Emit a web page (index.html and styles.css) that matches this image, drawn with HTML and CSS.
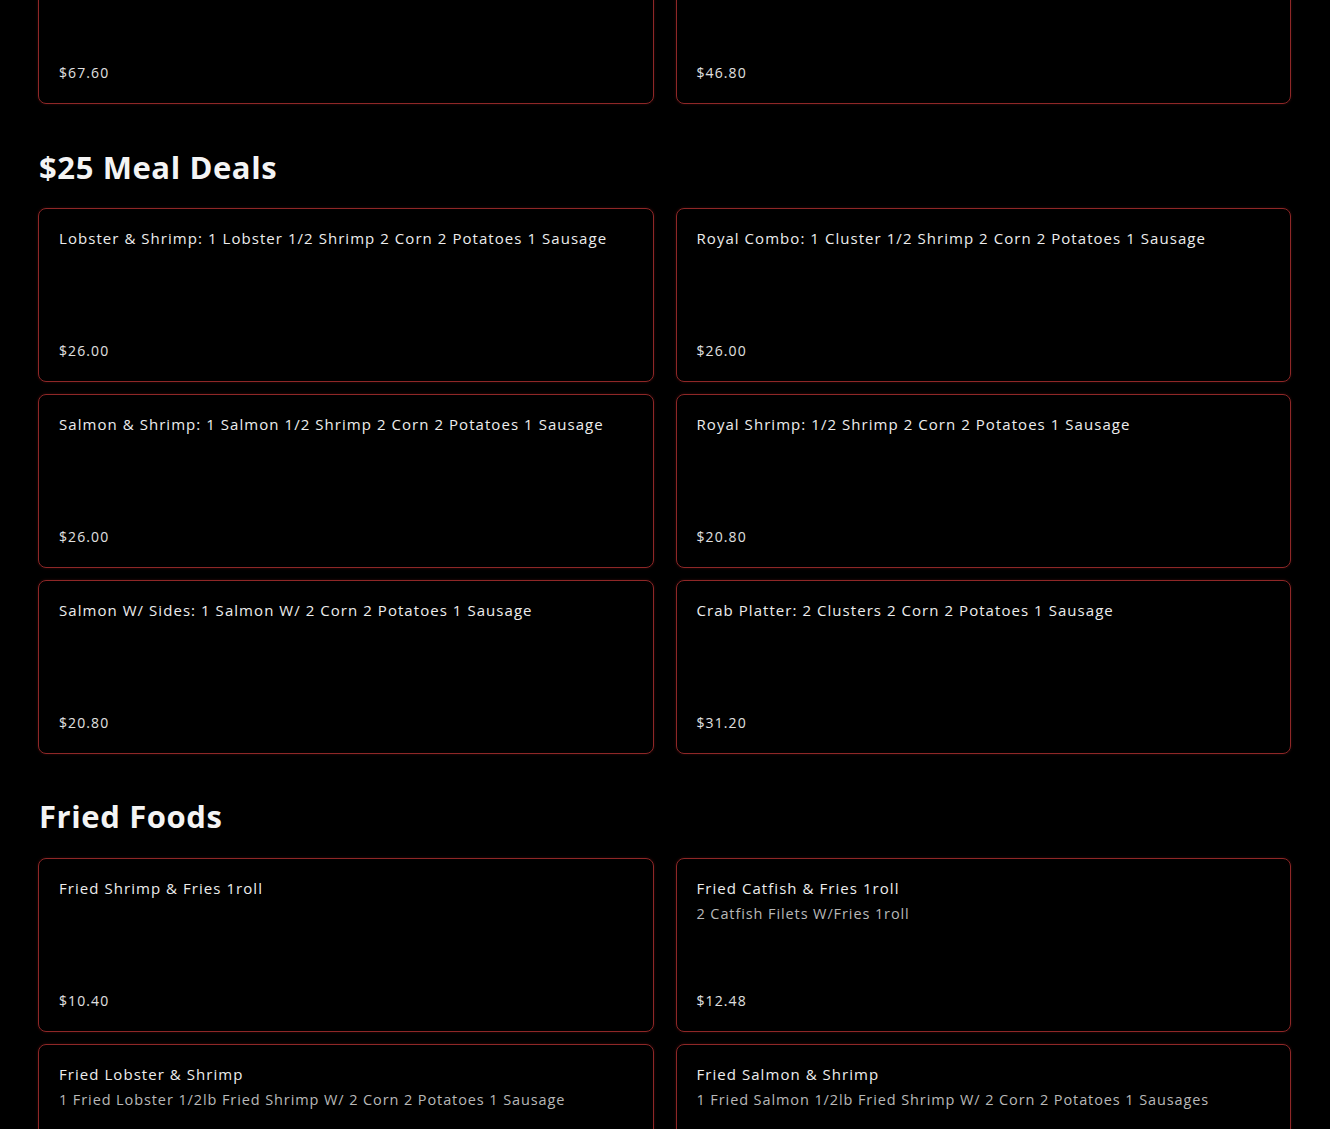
FILE: index.html
```html
<!DOCTYPE html>
<html lang="en">
<head>
<meta charset="utf-8">
<title>Menu</title>
<link rel="stylesheet" href="styles.css">
</head>
<body>
<main class="page">
  <div class="grid grid-top">
    <div class="card card-partial"><div class="price">$67.60</div></div>
    <div class="card card-partial"><div class="price">$46.80</div></div>
  </div>

  <h2 class="section-title">$25 Meal Deals</h2>
  <div class="grid">
    <div class="card"><div class="title">Lobster &amp; Shrimp: 1 Lobster 1/2 Shrimp 2 Corn 2 Potatoes 1 Sausage</div><div class="price">$26.00</div></div>
    <div class="card"><div class="title">Royal Combo: 1 Cluster 1/2 Shrimp 2 Corn 2 Potatoes 1 Sausage</div><div class="price">$26.00</div></div>
    <div class="card"><div class="title">Salmon &amp; Shrimp: 1 Salmon 1/2 Shrimp 2 Corn 2 Potatoes 1 Sausage</div><div class="price">$26.00</div></div>
    <div class="card"><div class="title">Royal Shrimp: 1/2 Shrimp 2 Corn 2 Potatoes 1 Sausage</div><div class="price">$20.80</div></div>
    <div class="card"><div class="title">Salmon W/ Sides: 1 Salmon W/ 2 Corn 2 Potatoes 1 Sausage</div><div class="price">$20.80</div></div>
    <div class="card"><div class="title">Crab Platter: 2 Clusters 2 Corn 2 Potatoes 1 Sausage</div><div class="price">$31.20</div></div>
  </div>

  <h2 class="section-title section-title-next">Fried Foods</h2>
  <div class="grid">
    <div class="card"><div class="title">Fried Shrimp &amp; Fries 1roll</div><div class="price">$10.40</div></div>
    <div class="card"><div class="title">Fried Catfish &amp; Fries 1roll</div><div class="desc">2 Catfish Filets W/Fries 1roll</div><div class="price">$12.48</div></div>
    <div class="card"><div class="title">Fried Lobster &amp; Shrimp</div><div class="desc">1 Fried Lobster 1/2lb Fried Shrimp W/ 2 Corn 2 Potatoes 1 Sausage</div><div class="price">$26.00</div></div>
    <div class="card"><div class="title">Fried Salmon &amp; Shrimp</div><div class="desc">1 Fried Salmon 1/2lb Fried Shrimp W/ 2 Corn 2 Potatoes 1 Sausages</div><div class="price">$26.00</div></div>
  </div>
</main>
</body>
</html>
```
FILE: styles.css
```css
html, body {
  margin: 0;
  padding: 0;
  background: #000;
  color: #ececec;
  font-family: "Open Sans", "Liberation Sans", sans-serif;
}
.page {
  padding: 0 39px 0 38px;
  height: 1129px;
  overflow: hidden;
}
.grid {
  display: grid;
  grid-template-columns: 1fr 1fr;
  column-gap: 22px;
  row-gap: 12px;
}
.grid-top {
  margin-top: -70px;
}
.card {
  border: 1px solid #8e2727;
  border-radius: 8px;
  box-shadow: 0 0 3px rgba(140, 30, 30, 0.35);
  min-height: 174px;
  box-sizing: border-box;
  padding: 17px 20px 19px;
  display: flex;
  flex-direction: column;
}
.title {
  font-size: 15px;
  line-height: 24px;
  letter-spacing: 1.05px;
  color: #ededed;
}
.desc {
  font-size: 14.5px;
  font-weight: 400;
  line-height: 28px;
  letter-spacing: 0.9px;
  color: #b8b8b8;
}
.price {
  margin-top: auto;
  font-size: 14px;
  line-height: 22px;
  letter-spacing: 1.1px;
  color: #e0e0e0;
}
.section-title {
  margin: 43px 0 21px 1px;
  font-size: 31px;
  line-height: 40px;
  font-weight: 700;
  letter-spacing: 0.6px;
  color: #f4f4f4;
}
.section-title-next {
  margin-top: 42px;
  margin-bottom: 22px;
}
```
